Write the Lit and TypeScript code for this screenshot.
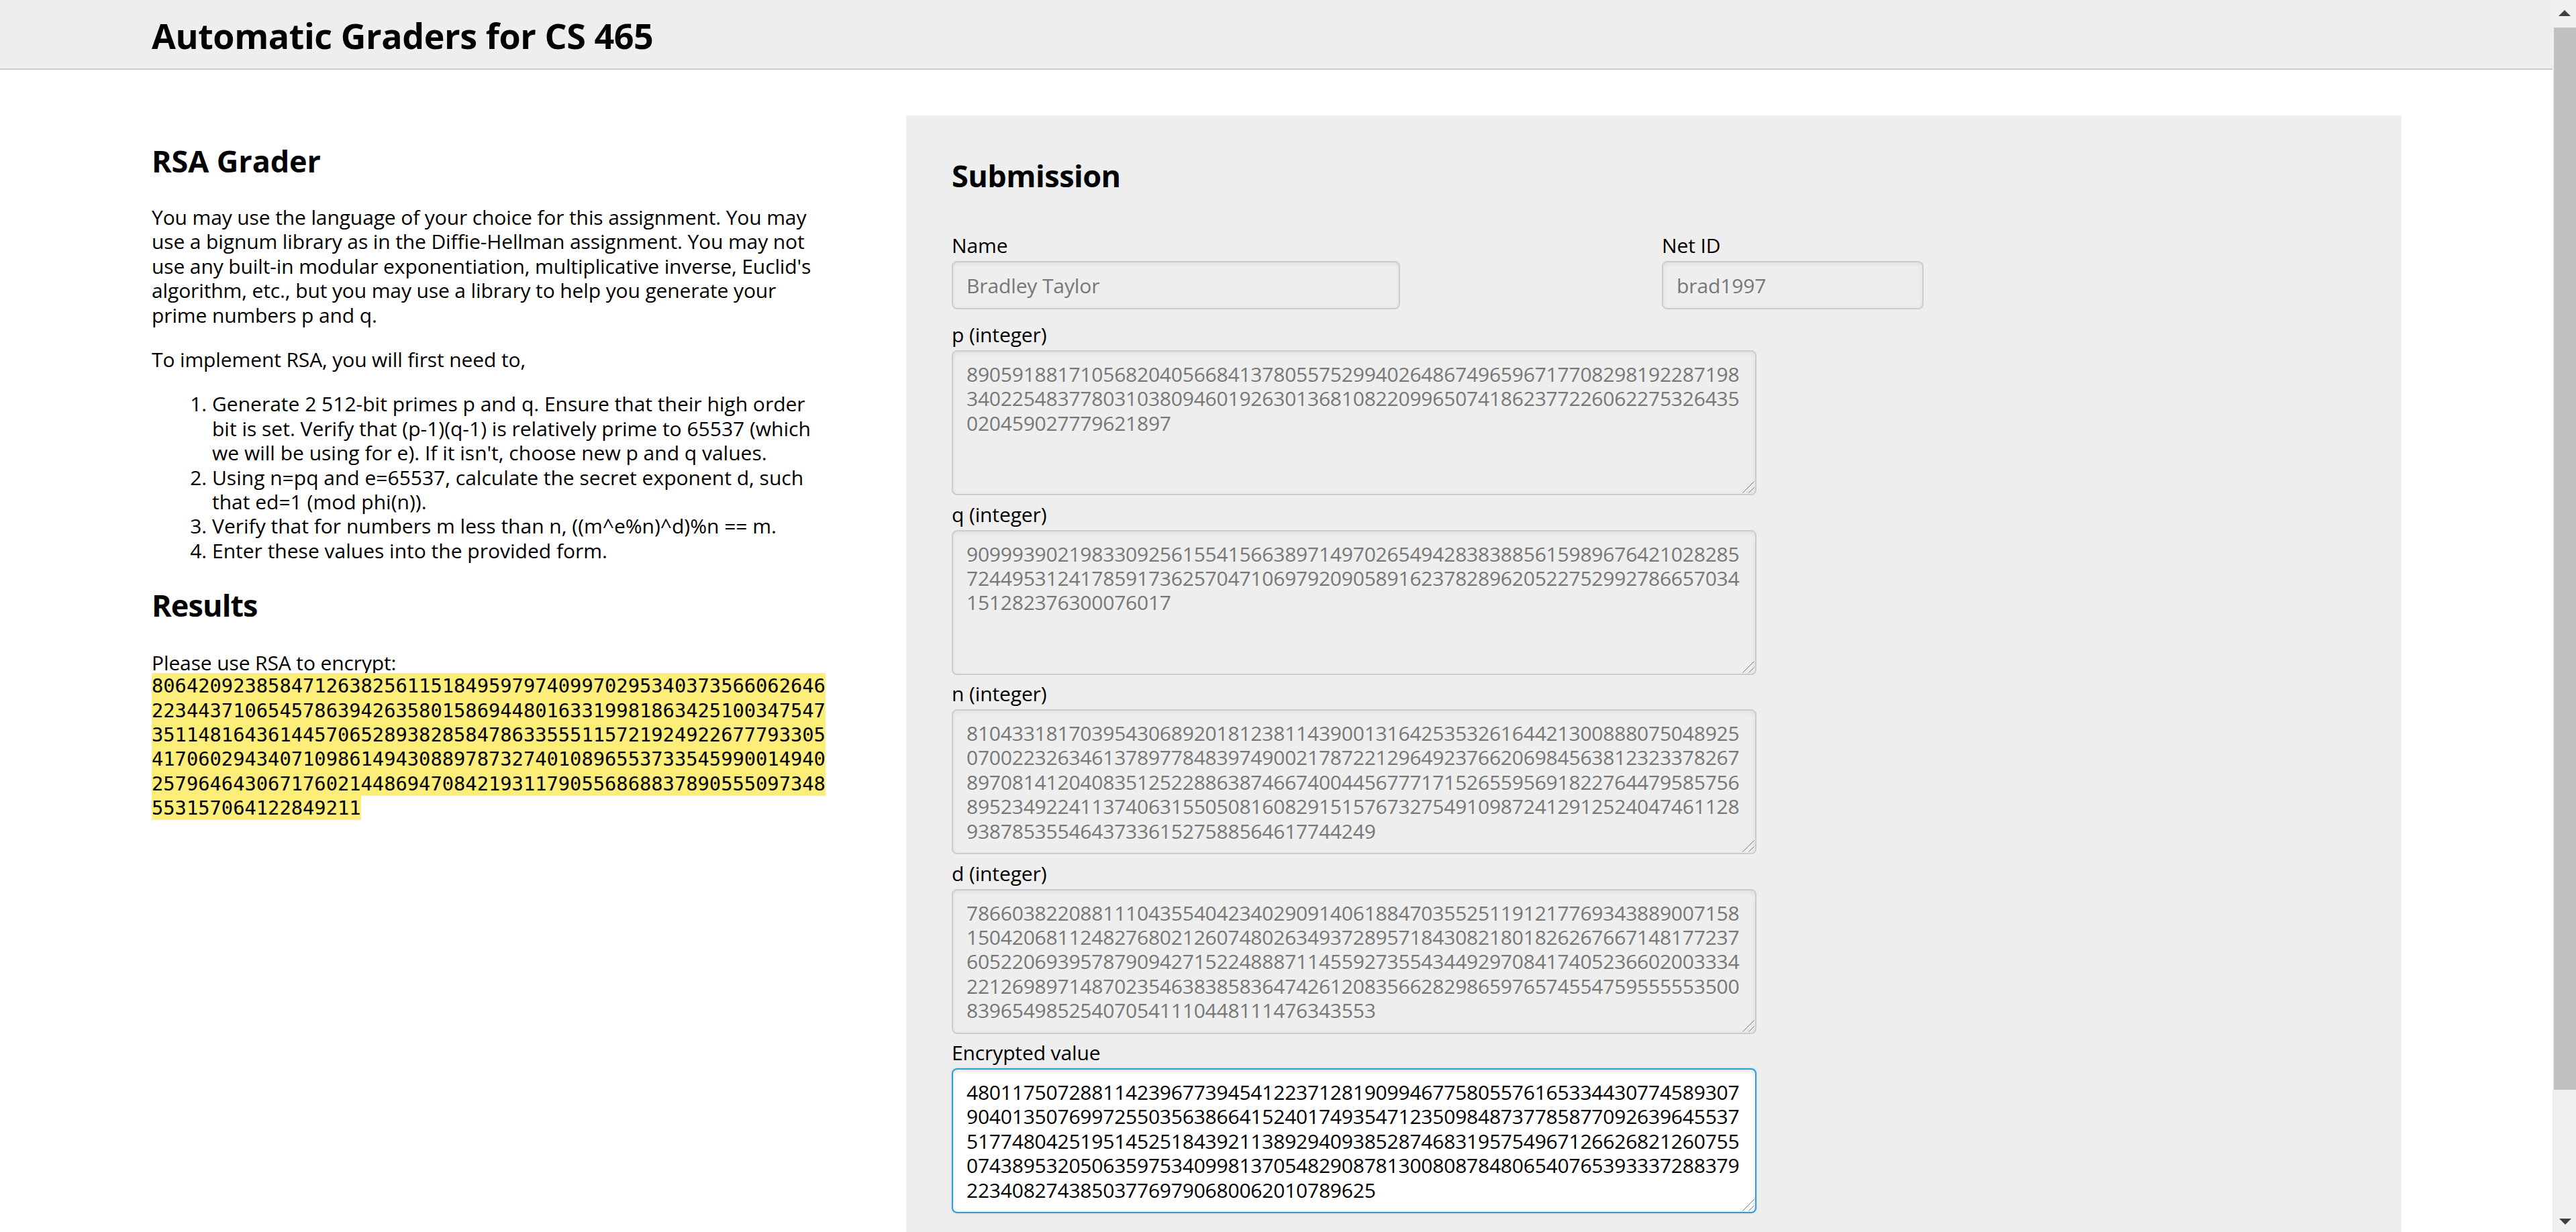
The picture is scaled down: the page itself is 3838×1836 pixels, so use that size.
import { LitElement, html, css } from "lit";
import { customElement } from "lit/decorators.js";

const FIELDS: { label: string; value: string }[] = [
  { label: "p (integer)", value: "8905918817105682040566841378055752994026486749659671770829819228719834022548377803103809460192630136810822099650741862377226062275326435020459027779621897" },
  { label: "q (integer)", value: "9099939021983309256155415663897149702654942838388561598967642102828572449531241785917362570471069792090589162378289620522752992786657034151282376300076017" },
  { label: "n (integer)", value: "81043318170395430689201812381143900131642535326164421300888075048925070022326346137897784839749002178722129649237662069845638123233782678970814120408351252288638746674004456777171526559569182276447958575689523492241137406315505081608291515767327549109872412912524047461128938785355464373361527588564617744249" },
  { label: "d (integer)", value: "78660382208811104355404234029091406188470355251191217769343889007158150420681124827680212607480263493728957184308218018262676671481772376052206939578790942715224888711455927355434492970841740523660200333422126989714870235463838583647426120835662829865976574554759555553500839654985254070541110448111476343553" },
];
const ENC = "48011750728811423967739454122371281909946775805576165334430774589307904013507699725503563866415240174935471235098487377858770926396455375177480425195145251843921138929409385287468319575496712662682126075507438953205063597534099813705482908781300808784806540765393337288379223408274385037769790680062010789625";
const MSG = "8064209238584712638256115184959797409970295340373566062646" +
  "2234437106545786394263580158694480163319981863425100347547" +
  "3511481643614457065289382858478633555115721924922677793305" +
  "4170602943407109861494308897873274010896553733545990014940" +
  "2579646430671760214486947084219311790556868837890555097348" +
  "553157064122849211";

@customElement("app-root")
export class AppRoot extends LitElement {
  static styles = css`
    :host { display: block; width: 3838px; height: 1836px; overflow: hidden; background: #fff; color: #000;
      font-family: "Open Sans", sans-serif; font-size: 30px; line-height: 36.4px; letter-spacing: -0.12px; }
    .page { display: flex; height: 1836px; }
    .main { width: 3803px; flex: none; overflow: hidden; }
    header { height: 102px; background: #eee; border-bottom: 2px solid #ccc; padding-left: 226px; display: flex; align-items: center; }
    h1 { margin: 4px 0 0; font-size: 52px; line-height: 104px; font-weight: 700; letter-spacing: -0.42px; }
    .content { display: flex; padding: 68px 0 0 226px; }
    .left { width: 1006px; margin-right: 118px; flex: none; }
    h2 { margin: 0; font-size: 45px; line-height: 56px; font-weight: 700; letter-spacing: -0.5px; }
    .left h2.first { margin-top: 40px; letter-spacing: -0.1px; }
    p { margin: 0; }
    .intro { margin-top: 38px; }
    .second { margin-top: 30px; }
    ol { margin: 30px 0 0; padding-left: 90px; letter-spacing: 0; }
    .res { margin-top: 35px; letter-spacing: -0.9px; }
    .please { margin-top: 40px; }
    .msgwrap { margin-top: -3px; font-family: "DejaVu Sans Mono", monospace; font-size: 28.75px; letter-spacing: 0; line-height: 36.4px; word-break: break-all; }
    .msg { background: #fcee79; padding: 1.5px 0; }
    .panel { width: 2228px; height: 1700px; background: #eee; padding: 60px 68px 0; box-sizing: border-box; }
    .panel h2 { line-height: 60px; }
    .row { display: flex; margin-top: 57px; }
    .cell { display: flex; flex-direction: column; }
    .name { width: 668px; margin-right: 390px; }
    .net { width: 390px; }
    label { display: block; height: 34px; line-height: 34px; }
    .box { box-sizing: border-box; border: 2px solid #ccc; box-shadow: inset 0 2px 6px #ddd; border-radius: 8px; background: #eee; color: #777; padding: 2px 20px 0; height: 72px; margin-top: 6px; display: flex; align-items: center; }
    .field { width: 1199px; margin-top: 11.5px; }
    .field.top { margin-top: 21px; }
    .area { position: relative; box-sizing: border-box; width: 1199px; height: 216px; margin-top: 6px; border: 2px solid #ccc; box-shadow: inset 0 2px 6px #ddd; border-radius: 8px; background: #eee; color: #777; padding: 16px 20px 0; letter-spacing: -0.22px; word-break: break-all; overflow: hidden; }
    .area.focus { background: #fff; color: #000; border-color: #339bd6; box-shadow: inset 0 2px 6px #ddd, 0 0 3px rgba(51, 155, 214, 0.35); }
    .grip { position: absolute; right: 1px; bottom: 1px; width: 18px; height: 18px; }
    .sb { width: 35px; flex: none; background: #f0f0f0; position: relative; display: flex; flex-direction: column; align-items: center; }
    .up { margin-top: 15px; }
    .thumb { position: absolute; left: 2px; right: 0; top: 41px; height: 1583px; background: #c1c1c1; }
    .down { position: absolute; bottom: 11px; left: 10px; }
  `;
  private grip() {
    return html`<svg class="grip" viewBox="0 0 18 18"><path d="M17.5 0.5L0.5 17.5M17.5 9.5L9.5 17.5" stroke="#777" stroke-width="1" fill="none"/></svg>`;
  }
  render() {
    return html`<div class="page"><div class="main">
      <header><h1>Automatic Graders for CS 465</h1></header>
      <div class="content">
        <div class="left">
          <h2 class="first">RSA Grader</h2>
          <p class="intro">You may use the language of your choice for this assignment. You may use a bignum library as in the Diffie-Hellman assignment. You may not use any built-in modular exponentiation, multiplicative inverse, Euclid's algorithm, etc., but you may use a library to help you generate your prime numbers p and q.</p>
          <p class="second">To implement RSA, you will first need to,</p>
          <ol>
            <li>Generate 2 512-bit primes p and q. Ensure that their high order bit is set. Verify that (p-1)(q-1) is relatively prime to 65537 (which we will be using for e). If it isn't, choose new p and q values.</li>
            <li>Using n=pq and e=65537, calculate the secret exponent d, such that ed=1 (mod phi(n)).</li>
            <li>Verify that for numbers m less than n, ((m^e%n)^d)%n == m.</li>
            <li>Enter these values into the provided form.</li>
          </ol>
          <h2 class="res">Results</h2>
          <div class="please">Please use RSA to encrypt:</div>
          <div class="msgwrap"><span class="msg">${MSG}</span></div>
        </div>
        <div class="panel">
          <h2>Submission</h2>
          <div class="row">
            <div class="cell name"><label>Name</label><div class="box">Bradley Taylor</div></div>
            <div class="cell net"><label>Net ID</label><div class="box">brad1997</div></div>
          </div>
          ${FIELDS.map((f, i) => html`<div class="field ${i === 0 ? "top" : ""}"><label>${f.label}</label><div class="area">${f.value}${this.grip()}</div></div>`)}
          <div class="field"><label>Encrypted value</label><div class="area focus">${ENC}${this.grip()}</div></div>
        </div>
      </div>
    </div>
    <div class="sb">
      <svg class="up" width="18" height="9" viewBox="0 0 18 9"><path d="M9 0L18 9H0Z" fill="#404040"/></svg>
      <div class="thumb"></div>
      <svg class="down" width="18" height="9" viewBox="0 0 18 9"><path d="M9 9L18 0H0Z" fill="#404040"/></svg>
    </div></div>`;
  }
}
